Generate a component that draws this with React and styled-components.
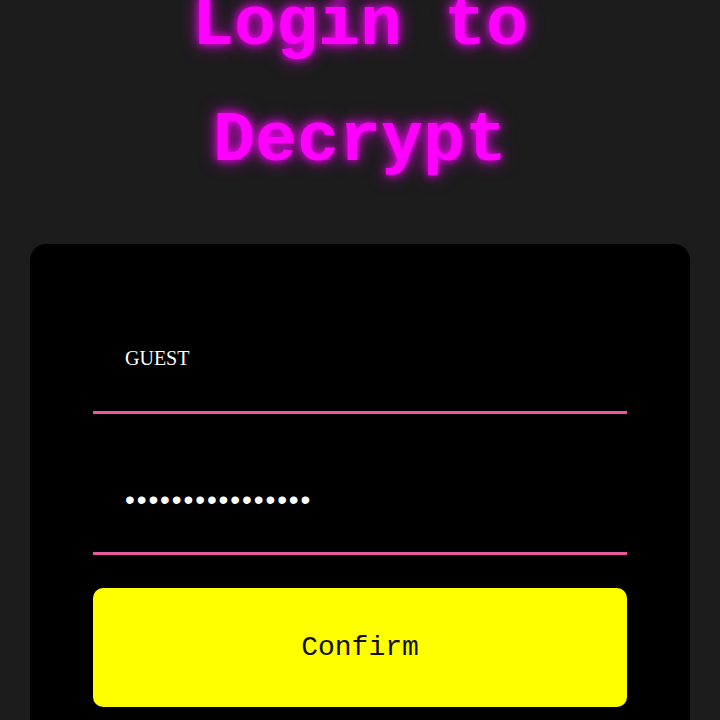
import React from 'react'
import styled, { createGlobalStyle } from 'styled-components'

const GlobalStyle = createGlobalStyle`
  html, body {
    margin: 0;
    background-color: #1c1c1c;
    overflow: hidden;
  }
`

const Page = styled.main`
  display: flex;
  flex-direction: column;
  align-items: center;
  min-height: 720px;
`

const Title = styled.h1`
  margin: -32px 0 44px;
  width: 100%;
  text-align: center;
  font-family: "Liberation Mono", "DejaVu Sans Mono", monospace;
  font-size: 70px;
  line-height: 116px;
  font-weight: 700;
  color: #ff00ff;
  text-shadow: 0 0 8px #ff00ff, 0 0 18px rgba(255, 0, 255, 0.7);
`

const Card = styled.form`
  box-sizing: border-box;
  width: 660px;
  padding: 62px 63px 63px;
  display: flex;
  flex-direction: column;
  gap: 33px;
  background-color: #000;
  border-radius: 16px;
`

const Field = styled.input`
  box-sizing: border-box;
  width: 100%;
  height: 108px;
  padding: 0 32px;
  border: none;
  border-bottom: 3px solid #e9589f;
  background: transparent;
  color: #fff;
  outline: none;
  font-family: "Liberation Serif", serif;
  font-size: 20px;

  &[type='password'] {
    font-family: "Liberation Sans", sans-serif;
    font-size: 28px;
    letter-spacing: 1.9px;
  }
`

const ConfirmButton = styled.button`
  height: 119px;
  border: none;
  border-radius: 10px;
  background-color: #ffff00;
  color: #111;
  font-family: "Liberation Mono", "DejaVu Sans Mono", monospace;
  font-size: 28px;
  cursor: pointer;
`

function App() {
  return (
    <Page>
      <GlobalStyle />
      <Title>
        Login to
        <br />
        Decrypt
      </Title>
      <Card onSubmit={(e) => e.preventDefault()}>
        <Field type="text" value="GUEST" readOnly />
        <Field type="password" value="0123456789abcdef" readOnly />
        <ConfirmButton type="submit">Confirm</ConfirmButton>
      </Card>
    </Page>
  )
}

export default App
